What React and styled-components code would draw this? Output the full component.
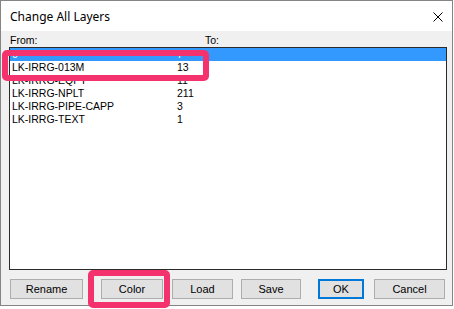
import React from "react";
import styled, { createGlobalStyle } from "styled-components";

const Global = createGlobalStyle`
  html, body { margin: 0; padding: 0; background: #ffffff; }
  body { font-family: "Liberation Sans", Arial, sans-serif; }
`;

const Stage = styled.div`
  position: relative;
  width: 454px;
  height: 309px;
  background: #ffffff;
  overflow: hidden;
`;

const Window = styled.div`
  box-sizing: border-box;
  width: 453px;
  height: 306px;
  border: 1px solid #858585;
  display: flex;
  flex-direction: column;
  background: #f0f0f0;
`;

const TitleBar = styled.div`
  height: 30px;
  flex: none;
  background: #ffffff;
  display: flex;
  align-items: center;
  justify-content: space-between;
  padding: 0 9px 0 9px;
`;

const Title = styled.span`
  font-family: "Noto Sans", "Open Sans", sans-serif;
  font-size: 12px;
  color: #000000;
  padding-top: 1px;
`;

const CloseButton = styled.div`
  width: 10px;
  height: 10px;
  display: flex;
  margin-top: 1px;
`;

const Client = styled.div`
  flex: 1;
  display: flex;
  flex-direction: column;
  padding: 0 0 0 8px;
`;

const LabelRow = styled.div`
  height: 16px;
  display: flex;
  align-items: flex-end;
  font-size: 10.5px;
  color: #000;
  line-height: 13px;
`;

const Label = styled.span`
  width: ${(p) => p.$w || "auto"};
  padding-left: ${(p) => p.$pl || 0}px;
`;

const ListBox = styled.div`
  box-sizing: border-box;
  width: 438px;
  height: 223px;
  border: 1px solid #2a2a2a;
  background: #ffffff;
  display: flex;
  flex-direction: column;
`;

const Row = styled.div`
  height: 13px;
  display: flex;
  align-items: center;
  font-size: 10.5px;
  line-height: 13px;
  background: ${(p) => (p.$selected ? "#3399ff" : "transparent")};
  color: ${(p) => (p.$selected ? "#ffffff" : "#000000")};
`;

const NameCell = styled.span`
  width: 165px;
  padding-left: 2px;
  white-space: nowrap;
`;

const CountCell = styled.span`
  white-space: nowrap;
`;

const ButtonRow = styled.div`
  display: flex;
  margin-top: 9px;
  height: 20px;
`;

const Button = styled.div`
  box-sizing: border-box;
  width: ${(p) => p.$w}px;
  margin-left: ${(p) => p.$ml}px;
  height: 20px;
  background: #e1e1e1;
  border: ${(p) => (p.$default ? "2px solid #0078d7" : "1px solid #adadad")};
  display: flex;
  align-items: center;
  justify-content: center;
  font-size: 11px;
  color: #000;
`;

const Callout = styled.div`
  position: absolute;
  box-sizing: border-box;
  left: ${(p) => p.$x}px;
  top: ${(p) => p.$y}px;
  width: ${(p) => p.$w}px;
  height: ${(p) => p.$h}px;
  border: 6px solid #f4326e;
  border-radius: 5px;
  pointer-events: none;
`;

const rows = [
  { name: "0", count: "7", selected: true },
  { name: "LK-IRRG-013M", count: "13" },
  { name: "LK-IRRG-EQPT", count: "11" },
  { name: "LK-IRRG-NPLT", count: "211" },
  { name: "LK-IRRG-PIPE-CAPP", count: "3" },
  { name: "LK-IRRG-TEXT", count: "1" },
];

const buttons = [
  { label: "Rename", w: 73, ml: 1 },
  { label: "Color", w: 62, ml: 18 },
  { label: "Load", w: 61, ml: 9 },
  { label: "Save", w: 60, ml: 8 },
  { label: "OK", w: 46, ml: 17, def: true },
  { label: "Cancel", w: 71, ml: 10 },
];

export default function App() {
  return (
    <>
      <Global />
      <Stage>
        <Window>
          <TitleBar>
            <Title>Change All Layers</Title>
            <CloseButton>
              <svg width="10" height="10" viewBox="0 0 10 10">
                <path d="M0.5 0.5 L9.5 9.5 M9.5 0.5 L0.5 9.5" stroke="#000" strokeWidth="1" />
              </svg>
            </CloseButton>
          </TitleBar>
          <Client>
            <LabelRow>
              <Label $w="195px" $pl={1}>From:</Label>
              <Label>To:</Label>
            </LabelRow>
            <ListBox>
              {rows.map((r) => (
                <Row key={r.name} $selected={r.selected}>
                  <NameCell>{r.name}</NameCell>
                  <CountCell>{r.count}</CountCell>
                </Row>
              ))}
            </ListBox>
            <ButtonRow>
              {buttons.map((b) => (
                <Button key={b.label} $w={b.w} $ml={b.ml} $default={b.def}>
                  {b.label}
                </Button>
              ))}
            </ButtonRow>
          </Client>
        </Window>
        <Callout $x={2} $y={50} $w={207} $h={31} />
        <Callout $x={88} $y={270} $w={82} $h={38} />
      </Stage>
    </>
  );
}
